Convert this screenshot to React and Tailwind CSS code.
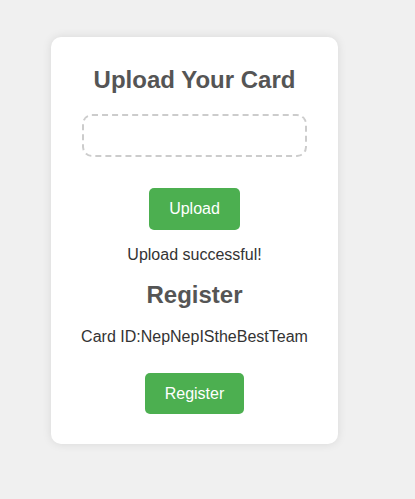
import React, { useState } from 'react';

const App = () => {
  const [cardId] = useState('NepNepISthebestTeam'.replace('thebest', 'theBest'));

  return (
    <div className="min-h-[499px] bg-[#f0f0f0] pl-[51px] pt-[37px] font-['Liberation_Sans',Arial,sans-serif]">
      <div className="w-[287px] bg-white rounded-[10px] shadow-[0_0_10px_rgba(0,0,0,0.1)] pt-[29px] pb-[30px] px-[30px] flex flex-col items-center">
        <h1 className="text-[24px] leading-[28px] font-bold text-[#555]">Upload Your Card</h1>

        {/* drop zone */}
        <div className="mt-[20px] w-[225px] h-[43px] border-2 border-dashed border-[#ccc] rounded-[10px]"></div>

        <button className="mt-[31px] w-[91px] h-[42px] bg-[#4caf50] text-white text-[16px] rounded-[5px]">
          Upload
        </button>

        <p className="mt-[16px] text-[16px] leading-[18px] text-[#333]">Upload successful!</p>

        <h2 className="mt-[17px] text-[24px] leading-[28px] font-bold text-[#555]">Register</h2>

        <p className="mt-[19px] text-[16px] leading-[18px] text-[#333] whitespace-nowrap">Card ID:{cardId}</p>

        <button className="mt-[27px] w-[99px] h-[41px] bg-[#4caf50] text-white text-[16px] rounded-[5px]">
          Register
        </button>
      </div>
    </div>
  );
};

export default App;
